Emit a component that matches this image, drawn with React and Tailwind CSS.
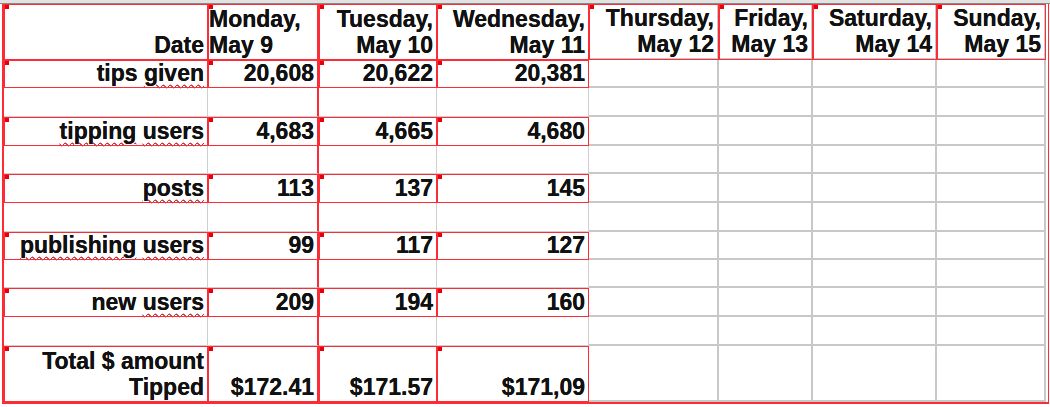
import React from "react";

const colWidths = [204, 111, 118, 152, 130, 94, 124, 109];

const days = [
  ["Monday,", "May 9"],
  ["Tuesday,", "May 10"],
  ["Wednesday,", "May 11"],
  ["Thursday,", "May 12"],
  ["Friday,", "May 13"],
  ["Saturday,", "May 14"],
  ["Sunday,", "May 15"],
];

const Squiggle = ({ children }) => (
  <span className="underline decoration-wavy decoration-red-500 decoration-1 underline-offset-[3px]">{children}</span>
);

const rows = [
  { h: 28, label: <>tips <Squiggle>given</Squiggle></>, values: ["20,608", "20,622", "20,381"] },
  { h: 29 },
  { h: 29, label: <><Squiggle>tipping</Squiggle> <Squiggle>users</Squiggle></>, values: ["4,683", "4,665", "4,680"] },
  { h: 28 },
  { h: 29, label: <Squiggle>posts</Squiggle>, values: ["113", "137", "145"] },
  { h: 29 },
  { h: 28, label: <><Squiggle>publishing</Squiggle> <Squiggle>users</Squiggle></>, values: ["99", "117", "127"] },
  { h: 28 },
  { h: 29, label: <>new <Squiggle>users</Squiggle></>, values: ["209", "194", "160"] },
  { h: 29 },
  {
    h: 56,
    label: (
      <>
        Total $ amount
        <br />
        Tipped
      </>
    ),
    values: ["$172.41", "$171.57", "$171,09"],
  },
];

function Cell({ col, red, left, children, height }) {
  const right =
    col === 1
      ? "border-r-2 border-r-red-500"
      : col >= 4
      ? "border-r-2 border-r-[#c8c8c8]"
      : "border-r border-r-[#cfcfcf]";
  const bottom = col >= 4 ? "border-b-2 border-b-[#c8c8c8]" : "border-b border-b-[#cfcfcf]";
  const align = left ? "justify-start pl-[1px] text-left" : "justify-end pr-[3px] text-right";
  return (
    <div
      style={{ height }}
      className={`relative flex items-end pb-px ${align} ${right} ${bottom} ${
        red ? "outline-1 outline-red-500 -outline-offset-1" : ""
      }`}
    >
      {red && <span className="absolute left-[1px] top-[1px] h-[4px] w-[4px] bg-red-600" />}
      {children}
    </div>
  );
}

export default function App() {
  return (
    <div
      className="h-[407px] w-[1050px] overflow-hidden bg-white text-[23px] font-bold leading-[26px] text-[#111] [text-shadow:0_0_0.6px_#000]"
      style={{ fontFamily: '"Liberation Sans", Arial, sans-serif' }}
    >
      <div className="h-[4px] border-b border-b-[#8a8a8a] bg-[#e2e2e2]" />
      <div className="ml-[2px] flex w-[1047px] flex-col border-l-2 border-r border-b-2 border-l-red-500 border-r-red-500 border-b-red-500 pr-[2px]">
        <div className="grid" style={{ gridTemplateColumns: colWidths.map((w) => `${w}px`).join(" ") }}>
          <Cell col={0} red height={56}>
            Date
          </Cell>
          {days.map(([d, m], i) => (
            <Cell key={d} col={i + 1} red left={i === 0} height={56}>
              <div>
                {d}
                <br />
                {m}
              </div>
            </Cell>
          ))}

          {rows.map((row, r) =>
            colWidths.map((_, c) => {
              const filled = !!row.label && c < 4;
              let content = null;
              if (row.label && c === 0) content = <div>{row.label}</div>;
              else if (row.values && c >= 1 && c <= 3) content = <div>{row.values[c - 1]}</div>;
              return (
                <Cell key={`${r}-${c}`} col={c} red={filled} height={row.h}>
                  {content}
                </Cell>
              );
            })
          )}
        </div>
      </div>
    </div>
  );
}
